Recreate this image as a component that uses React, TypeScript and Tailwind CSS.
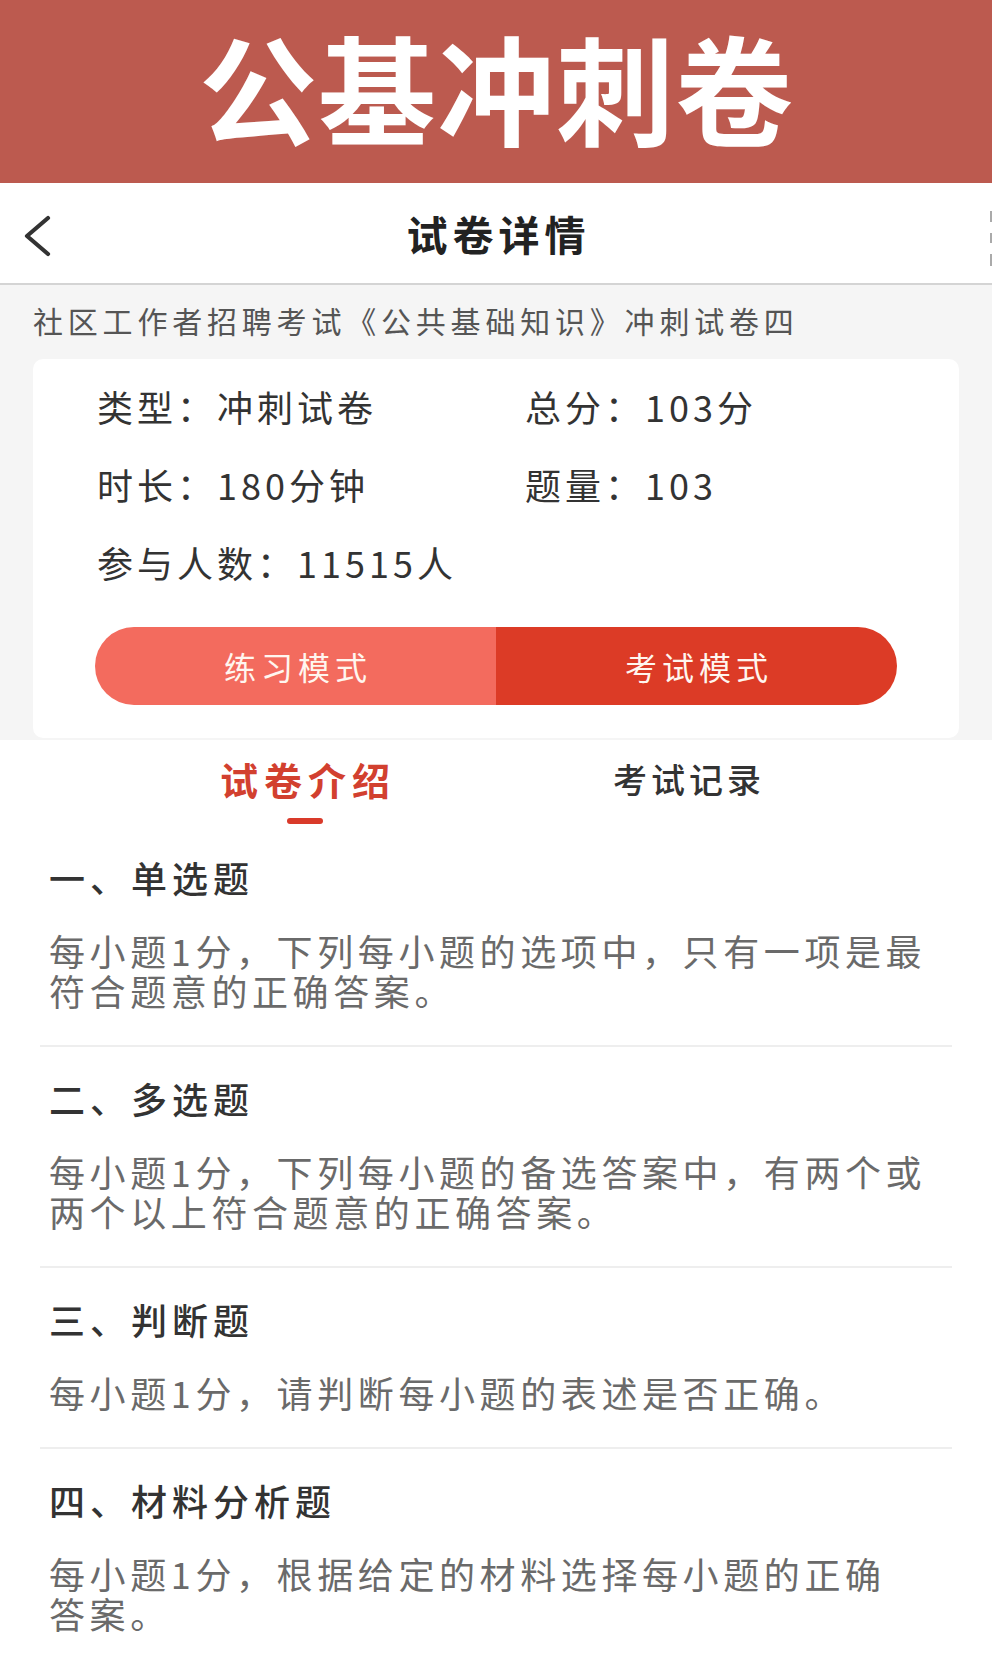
import React from "react";

const FONT = { fontFamily: '"Noto Sans CJK SC", "Noto Sans", sans-serif' };

const sections = [
  {
    title: "一、单选题",
    desc: ["每小题1分，下列每小题的选项中，只有一项是最", "符合题意的正确答案。"],
  },
  {
    title: "二、多选题",
    desc: ["每小题1分，下列每小题的备选答案中，有两个或", "两个以上符合题意的正确答案。"],
  },
  {
    title: "三、判断题",
    desc: ["每小题1分，请判断每小题的表述是否正确。"],
  },
  {
    title: "四、材料分析题",
    desc: ["每小题1分，根据给定的材料选择每小题的正确", "答案。"],
  },
];

export default function App() {
  return (
    <div className="w-[992px] min-h-[1656px] bg-white overflow-hidden" style={FONT}>
      {/* Red banner */}
      <div className="h-[183px] bg-[#bc5a4f] flex items-center justify-center pb-[12px]">
        <span className="text-white font-bold text-[118px] leading-none tracking-[1px] pl-[1px]">公基冲刺卷</span>
      </div>

      {/* Nav bar */}
      <div className="relative h-[102px] bg-white border-b-2 border-[#d4d4d4] flex items-center justify-center">
        <div className="absolute left-[22px] top-[32px]">
          <svg width="32" height="44" viewBox="0 0 32 44">
            <path d="M26 3 L5 21 L26 39" fill="none" stroke="#333" strokeWidth="4.2" strokeLinecap="round" strokeLinejoin="round" />
          </svg>
        </div>
        <span className="text-[41px] font-bold text-[#222] tracking-[5px] pl-[5px] leading-none">试卷详情</span>
        <div className="absolute right-0 top-[28px] flex flex-col gap-[11px]">
          <div className="w-[2px] h-[11px] bg-[#aaa]" />
          <div className="w-[2px] h-[10px] bg-[#aaa]" />
          <div className="w-[2px] h-[12px] bg-[#aaa]" />
        </div>
      </div>

      {/* Gray section */}
      <div className="bg-[#f5f5f5] pt-[15px] pb-[2px]">
        <div className="px-[33px] text-[30px] leading-[40px] text-[#555] tracking-[4.8px] whitespace-nowrap">
          社区工作者招聘考试《公共基础知识》冲刺试卷四
        </div>
        <div className="mt-[19px] mx-[33px] bg-white rounded-[10px] pt-[25px] pb-[33px]">
          <div className="grid grid-cols-[428px_1fr] gap-y-[34px] pl-[64px] text-[36px] leading-[44px] text-[#333] tracking-[4px]">
            <div>类型：冲刺试卷</div>
            <div>总分：103分</div>
            <div>时长：180分钟</div>
            <div>题量：103</div>
            <div>参与人数：11515人</div>
          </div>
          <div className="mt-[43px] mx-[62px] h-[78px] flex rounded-full overflow-hidden">
            <div className="flex-1 bg-[#f36b5e] flex items-center justify-center text-[#fff6ef] text-[32px] tracking-[5px] pl-[5px]">
              练习模式
            </div>
            <div className="flex-1 bg-[#dc3b26] flex items-center justify-center text-[#fff6ef] text-[32px] tracking-[5px] pl-[5px]">
              考试模式
            </div>
          </div>
        </div>
      </div>

      {/* Tabs */}
      <div className="flex justify-center pt-[17px]">
        <div className="w-[382px] flex flex-col items-center">
          <div className="text-[38px] leading-[44px] font-bold text-[#d2402f] tracking-[6px] pl-[6px]">试卷介绍</div>
          <div className="mt-[17px] w-[36px] h-[6px] rounded-full bg-[#d93a2a]" />
        </div>
        <div className="w-[382px] flex flex-col items-center">
          <div className="text-[34px] leading-[44px] font-medium text-[#333] tracking-[4px] pl-[4px]">考试记录</div>
        </div>
      </div>

      {/* Sections */}
      <div className="pt-[2px]">
        {sections.map((s, i) => (
          <div key={i}>
            <div className="px-[49px] pt-[31px] pb-[35px]">
              <div className="text-[36px] leading-[40px] font-medium text-[#333] tracking-[5px]">{s.title}</div>
              <div className="mt-[33px] text-[36px] leading-[40px] text-[#6a6a6a] tracking-[4.6px] whitespace-nowrap">
                {s.desc.map((l, j) => (
                  <div key={j}>{l}</div>
                ))}
              </div>
            </div>
            {i < sections.length - 1 && <div className="mx-[40px] h-[2px] bg-[#eeeeee]" />}
          </div>
        ))}
      </div>
    </div>
  );
}
